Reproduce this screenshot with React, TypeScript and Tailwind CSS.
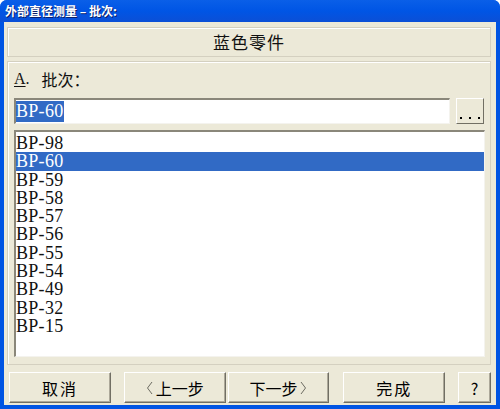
const items = ["BP-98", "BP-60", "BP-59", "BP-58", "BP-57", "BP-56", "BP-55", "BP-54", "BP-49", "BP-32", "BP-15"];

const cjk = "font-['Liberation_Serif','Noto_Sans_CJK_SC',serif]";

function XpButton({ label, className }: { label: React.ReactNode; className: string }) {
  return (
    <div
      className={`${className} h-[31px] flex items-center justify-center bg-[#ECE9D8] border border-t-[#ffffff] border-l-[#ffffff] border-b-[#716f64] border-r-[#716f64] shadow-[inset_-1px_-1px_0_#aca899] text-[16px] text-black font-['Noto_Sans_CJK_SC',sans-serif]`}
    >
      {label}
    </div>
  );
}

// thin angle bracket as drawn beside the wizard step buttons
function Chevron({ dir }: { dir: "left" | "right" }) {
  return (
    <svg width="7" height="14" viewBox="0 0 7 14" className={dir === "left" ? "mr-[3px]" : "ml-[3px]"}>
      <path
        d={dir === "left" ? "M6 1 L1.5 7 L6 13" : "M1 1 L5.5 7 L1 13"}
        fill="none"
        stroke="#6b6a60"
        strokeWidth="1"
      />
    </svg>
  );
}

export default function App() {
  const selected = "BP-60";
  return (
    <div className="w-[500px] h-[409px] bg-[#0054e3] rounded-t-[7px] flex flex-col overflow-hidden">
      <div className="h-[22px] shrink-0 px-[5px] flex items-center bg-gradient-to-b from-[#0a5fe8] via-[#0055e5] to-[#0b4fd6]">
        <span className="text-white font-bold text-[12px] font-['Noto_Sans_CJK_SC',sans-serif] leading-none [text-shadow:1px_1px_0_#0a1e6a]">
          外部直径测量 – 批次:
        </span>
      </div>

      <div className="flex-1 mx-[4px] mb-[4px] bg-[#ECE9D8] pt-[5px] pl-[3px] pr-[5px] flex flex-col">
        <div className="h-[30px] border border-[#d4d0c0] shadow-[inset_1px_1px_0_#fff] flex items-center justify-center text-[17px] text-[#111] font-['Noto_Sans_CJK_SC',sans-serif] tracking-[1px]">
          蓝色零件
        </div>

        <div className="mt-[4px] h-[304px] border border-[#d4d0c0] shadow-[inset_1px_1px_0_#fff] px-[6px] flex flex-col">
          <div className="mt-[8px] h-[18px] flex items-center text-[16px] text-[#111] font-['Noto_Sans_CJK_SC',sans-serif]">
            <span className="underline underline-offset-2 font-['Liberation_Serif',serif]">A</span>
            <span className="font-['Liberation_Serif',serif]">.</span>
            <span className="ml-[12px]">批次：</span>
          </div>

          <div className="mt-[10px] flex items-stretch h-[26px]">
            <div className="w-[438px] border-t-2 border-l-2 border-t-[#8a877a] border-l-[#8a877a] border-b border-r border-b-[#f4f3ee] border-r-[#f4f3ee] bg-white flex items-center">
              <span className={`${cjk} text-[18px] leading-[21px] tracking-[0.3px] bg-[#316ac5] text-white`}>{selected}</span>
            </div>
            <div className="ml-[6px] w-[28px] bg-[#ECE9D8] border border-t-[#fff] border-l-[#fff] border-b-[#716f64] border-r-[#716f64] flex items-end justify-center pb-[4px]">
              <span className="flex gap-[7px]">
                <span className="w-[2px] h-[2px] bg-black" />
                <span className="w-[2px] h-[2px] bg-black" />
                <span className="w-[2px] h-[2px] bg-black" />
              </span>
            </div>
          </div>

          <div className="mt-[6px] w-[471px] h-[227px] border-t-2 border-l-2 border-t-[#8a877a] border-l-[#8a877a] border-b border-r border-b-[#f4f3ee] border-r-[#f4f3ee] bg-white pt-[2px]">
            {items.map((it) => (
              <div
                key={it}
                className={`${cjk} h-[18.3px] leading-[18.3px] text-[18px] tracking-[0.3px] ${it === selected ? "bg-[#316ac5] text-white" : "text-[#111]"}`}
              >
                {it}
              </div>
            ))}
          </div>
        </div>

        <div className="mt-[7px] flex items-start">
          <XpButton label="取消" className="ml-[2px] w-[102px] tracking-[2px]" />
          <XpButton label={<><Chevron dir="left" />上一步</>} className="ml-[13px] w-[102px]" />
          <XpButton label={<>下一步<Chevron dir="right" /></>} className="ml-[2px] w-[102px]" />
          <XpButton label="完成" className="ml-[14px] w-[102px] tracking-[2px]" />
          <XpButton label="?" className="ml-[13px] w-[33px]" />
        </div>
      </div>
    </div>
  );
}
